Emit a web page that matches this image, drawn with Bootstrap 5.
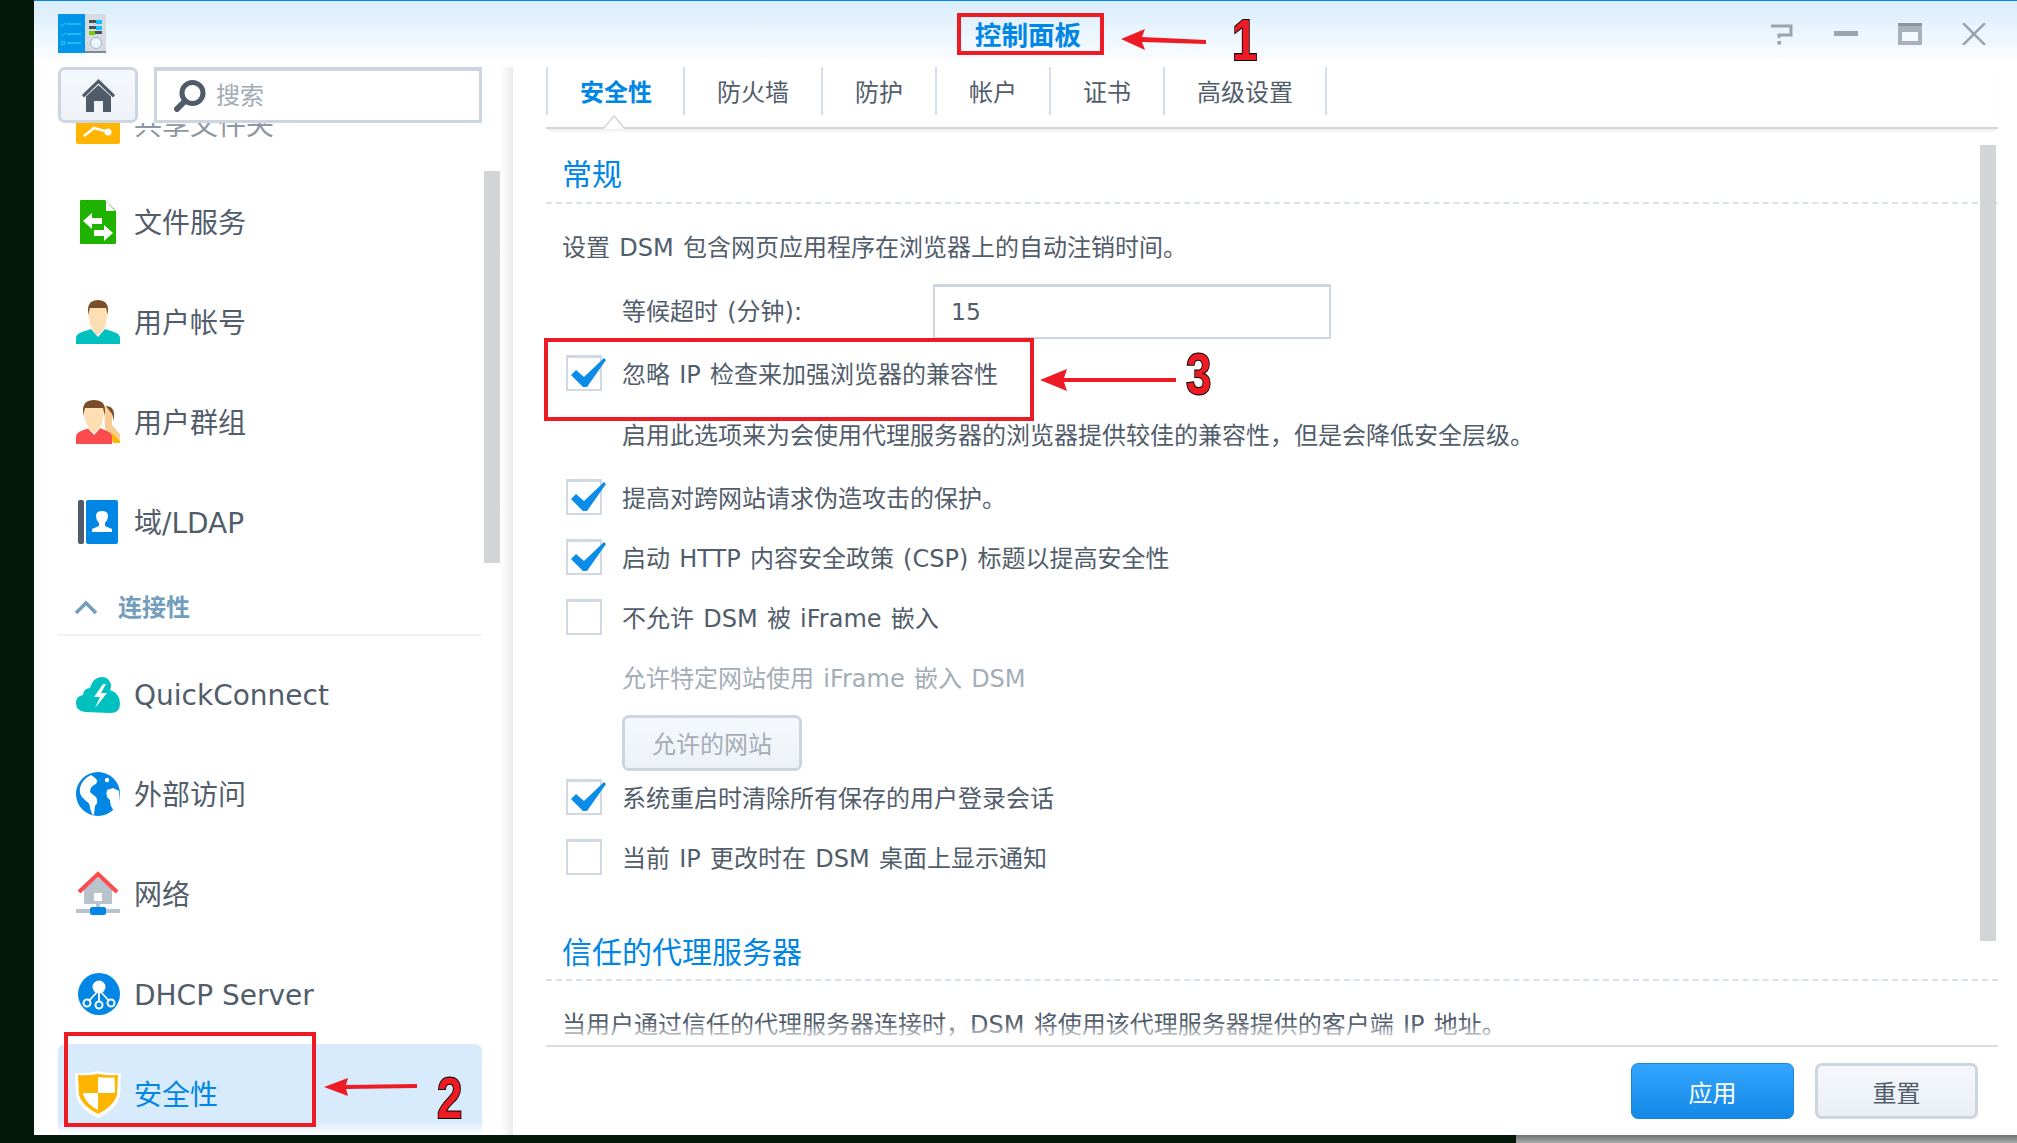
<!DOCTYPE html>
<html lang="zh"><head><meta charset="utf-8"><title>控制面板</title>
<link href="https://cdn.jsdelivr.net/npm/bootstrap@5.3.0/dist/css/bootstrap.min.css" rel="stylesheet">
<style>
html,body{height:100%;overflow:hidden}
body{background:#04190a;font-family:"DejaVu Sans","Noto Sans CJK SC",sans-serif;color:#525d6b;position:relative;font-size:24px}
.stage{height:1143px}
.upper{height:1135px}
.leftgap{width:34px;flex:none}
.win{background:#fff;min-width:0}
.titlebar{height:60px;flex:none;border-top:1px solid #0086e5;background:linear-gradient(#d8ecfc,#fbfdff);padding:7px 31px 0 24px}
.logo{width:48px;height:40px}
.wintitle{font-size:26.600px;font-weight:700;color:#0086e5;margin:3px 0 0 12px;line-height:1.2}
.sidecol,.rightctl{flex:1 1 0}
.rightctl{gap:40px}
.side{width:466px;flex:none;padding:7px 18px 0 24px;position:relative}
.sidetop{height:56px;gap:16px;flex:none}
.homebtn{width:80px;height:56px;padding:0;border:3px solid #ccd5e0;border-radius:7px;background:linear-gradient(#f5f9fd,#eef2f7)}
.searchbox{width:328px;height:56px;border:3px solid #ccd5e0;border-top-width:4px;background:#fff;padding-left:17px;gap:10px}
.searchbox input{border:0;outline:0;padding:0;font-size:24px;width:240px;color:#525d6b;background:transparent}
.searchbox input::placeholder{color:#a3abb4;opacity:1}
.menu{height:1012px;overflow:hidden}
.mitem{height:100px;padding-left:18px;font-size:28px;gap:14px;line-height:1.2}
.mitem svg{width:44px;height:44px;flex:none;overflow:visible}
.mitem span{padding-top:3px}
.mfirst{height:49px;overflow:hidden}
.mfirst .minner{margin-top:-26px;gap:14px;color:#8e97a2}
.mfirst .minner span{padding-top:8px;font-size:28px}
.sechead{height:64px;padding:9px 0 0 16px;border-bottom:2px solid #eef1f5;gap:20px;font-size:24px;font-weight:700;color:#739dbd;margin-bottom:8px}
.msel{height:100px;color:#0086e5;background:linear-gradient(#d8ebfc 78px,#fff 91px);border-radius:7px 7px 0 0}
.thumb1{position:absolute;left:450px;top:111px;width:16px;height:392px;background:#d3d4d6}
.divider{width:15px;flex:none;margin-top:7px;background:linear-gradient(90deg,#fff,#ececec 13px,#fff 13px)}
.mainp{min-width:0;padding:7px 19px 0 31px}
.tabbar{height:62px;flex:none;border-bottom:2px solid #d4d5d6;position:relative;align-items:flex-start;box-shadow:0 3px 4px -2px #e3e3e3;list-style:none;margin:0;padding:0}
.tabi{height:48px;padding:4px 32px 0;border-right:2px solid #d5deea;font-size:24px;color:#525d6b;line-height:1.2}
.tabi.first{border-left:2px solid #d5deea;font-weight:700;color:#0086e5;padding:4px 31px 0 32px}
.notch{position:absolute;left:54px;top:48px;width:28px;height:14px}
.scroller{height:916px;flex:none;overflow:hidden;position:relative;word-spacing:1.600px}
.scroller::after{content:"";position:absolute;left:0;right:0;bottom:0;height:22px;background:linear-gradient(rgba(255,255,255,0),#fff 85%)}
.secttl{border-bottom:2px dashed #d8e0ea;padding-left:16px;font-size:30px;color:#0086e5;line-height:40px}
.s1{height:75px;padding-top:26px}
.s2{height:106px;padding-top:58px}
.ln{line-height:41px;height:40px;white-space:nowrap}
.ind1{padding-left:16px}
.ind2{padding-left:76px}
.lab{width:311px;flex:none}
.numinp{width:398px;height:55px;border:2px solid #ccd5e0;border-top-width:3px;border-radius:0;padding:0 16px;font-size:23.400px;color:#525d6b;font-family:inherit;box-shadow:none}
.chk{padding-left:20px;height:36px;gap:20px;white-space:nowrap}
.chk .txt{margin-top:3px}
.box{width:36px;height:36px;border:2px solid #d0d9e4;border-top-width:3px;flex:none;position:relative;background:#fff}
.box svg{position:absolute;left:-2px;top:-3px;width:40px;height:36px;overflow:visible}
.muted{color:#a4adb7}
.mt8{margin-top:8px}
.allowbtn{width:180px;height:56px;padding:4px 0 0;border:3px solid #ccd5e0;border-radius:7px;background:linear-gradient(#f5f9fd,#eef2f7);color:#a4adb7;font-size:24px;margin-left:76px;line-height:1}
.foot{height:90px;flex:none;border-top:2px solid #dcdcdc;padding:16px 20px 0 0;gap:21px}
.fbtn{width:163px;height:56px;padding:5px 0 0;border-radius:7px;font-size:24px;line-height:1}
.fprim{background:linear-gradient(#33a6ff,#1488e6);border:1px solid #1a85dc;color:#fff}
.fsec{background:linear-gradient(#f5f9fd,#e9eef5);border:3px solid #ccd5e0;color:#525d6b}
.thumb2{position:absolute;left:1946px;top:145px;width:16px;height:796px;background:#d3d4d6}
.lower{height:8px}
.lowerr{width:501px;background:linear-gradient(#6e7270,#a8aaa9)}
.anno{position:absolute;left:0;top:0;width:2017px;height:1143px;pointer-events:none}
.annonum{font-family:"Liberation Sans",sans-serif;font-weight:700;font-size:57px;fill:#ed1c24;stroke:#000;stroke-width:2px;paint-order:stroke}
</style></head>
<body>
<div class="stage d-flex flex-column">
 <div class="upper d-flex">
  <div class="leftgap"></div>
  <div class="win flex-grow-1 d-flex flex-column position-relative">
   <div class="titlebar d-flex align-items-center">
    <div class="sidecol">
     <svg class="logo d-block" viewBox="0 0 48 40"><rect width="27" height="39" fill="#0095e8"/><rect x="27" width="21" height="39" fill="#d5dbe0"/><rect x="27" y="37" width="21" height="2" fill="#7d8791"/><path d="M9 10h14M9 20h14M9 29h14" stroke="#25c8ff" stroke-width="1.300"/><path d="M3 10l2 2 3-4M3 20l2 2 3-4" stroke="#25c8ff" fill="none"/><rect x="3.500" y="27.500" width="3" height="3" fill="none" stroke="#25c8ff"/><rect x="31" y="6" width="13" height="3" fill="#48525c"/><rect x="38" y="6" width="6" height="4" fill="#10c0ff"/><rect x="31" y="12" width="13" height="3" fill="#48525c"/><rect x="38" y="12" width="6" height="4" fill="#10c0ff"/><rect x="31" y="17" width="13" height="3" fill="#48525c"/><rect x="31" y="17" width="6" height="4" fill="#6fd200"/><circle cx="38" cy="29" r="5.500" fill="#eaf6ff" stroke="#aab3bb"/></svg>
    </div>
    <div class="wintitle">控制面板</div>
    <div class="sidecol rightctl d-flex justify-content-end align-items-center">
     <svg width="24" height="22" viewBox="0 0 24 22"><path d="M1 3h20v9H9v3" fill="none" stroke="#9aa3ae" stroke-width="3"/><rect x="7.500" y="18" width="3.500" height="3.500" fill="#9aa3ae"/></svg>
     <svg width="24" height="6" viewBox="0 0 24 6"><rect width="24" height="5" fill="#9aa3ae"/></svg>
     <svg width="24" height="22" viewBox="0 0 24 22"><path d="M0 0h24v22H0z" fill="#a9b1bb"/><rect y="0" width="24" height="3" fill="#8b95a1"/><rect x="4" y="9" width="16" height="9" fill="#f4f9fe"/></svg>
     <svg width="24" height="22" viewBox="0 0 24 22"><path d="M1 0l22 22M23 0L1 22" stroke="#9aa3ae" stroke-width="2.500"/></svg>
    </div>
   </div>
   <div class="d-flex flex-grow-1" style="min-height:0">
    <nav class="side">
     <div class="sidetop d-flex">
      <button class="btn homebtn d-flex align-items-center justify-content-center" type="button" aria-label="首页">
       <svg width="33" height="33" viewBox="0 0 33 33"><path d="M16.500 0L33 16l-2 2.500-14.500-14L2 18.500 0 16z" fill="#4f5b68"/><path d="M4 17.500L16.500 6 29 17.500V33H21V22h-9v11H4z" fill="#4f5b68"/></svg>
      </button>
      <div class="searchbox d-flex align-items-center">
       <svg width="32" height="32" viewBox="0 0 32 32" class="flex-none"><circle cx="18.500" cy="13" r="10.500" fill="none" stroke="#4f5b68" stroke-width="5"/><path d="M11 21l-8 8" stroke="#4f5b68" stroke-width="6" stroke-linecap="round"/></svg>
       <input type="text" placeholder="搜索" aria-label="搜索">
      </div>
     </div>
     <div class="menu">
      <div class="mfirst ps-3"><div class="minner d-flex align-items-center" style="padding-left:2px">
       <svg width="44" height="44" viewBox="0 0 44 44" class="flex-none"><path d="M0 2h44v40q0 2-2 2H2q-2 0-2-2z" fill="#ffb400"/><path d="M8 36l10-8 14 4" stroke="#fff" stroke-width="2.500" fill="none"/><circle cx="32" cy="32" r="3.500" fill="#fff"/></svg>
       <span>共享文件夹</span></div></div>
      <div class="mitem d-flex align-items-center"><svg viewBox="0 0 44 44"><path d="M4 1q0-1 1-1h24l11 11v32q0 1-1 1H5q-1 0-1-1z" fill="#1fb300"/><path d="M30 1l9 10h-9z" fill="#fff"/><path d="M7 21l9-8v5h10v6H16v5zM37 33l-9 8v-5H18v-6h10v-5z" fill="#fff"/></svg><span>文件服务</span></div>
      <div class="mitem d-flex align-items-center"><svg viewBox="0 0 44 44"><path d="M0 44v-6q0-4 6-6l9-3 7 8 7-8 9 3q6 2 6 6v6z" fill="#00c0c0"/><path d="M12 11q0-11 10-11t10 11l-2 13q-3 9-8 11-5-2-8-11z" fill="#fddfb3"/><path d="M12 15V10Q12 0 22 0t10 10v5l-2-7H14z" fill="#7a4e2a"/></svg><span>用户帐号</span></div>
      <div class="mitem d-flex align-items-center"><svg viewBox="0 0 44 44"><path d="M28 6q8 0 8 9v10l8 9q0 6-1 8h-8l-6-14z" fill="#f9cc93"/><path d="M35 32l9 9v2h-7z" fill="#ffb400"/><path d="M30 6q7 0 8 7v8l-2-7z" fill="#7a4e2a"/><path d="M0 44v-7q0-4 5-6l8-3 5 7 6-7 7 3q5 2 5 6v7z" fill="#fa4b4e"/><path d="M7 11q0-11 11-11t11 11l-2 11q-3 8-9 12-6-4-9-12z" fill="#fddfb3" stroke="#fff"/><path d="M7 16V10Q7 0 18 0t11 10v6l-2-8H9z" fill="#7a4e2a"/></svg><span>用户群组</span></div>
      <div class="mitem d-flex align-items-center"><svg viewBox="0 0 44 44"><rect x="2" width="6" height="44" rx="2" fill="#4f5b68"/><rect x="10" width="32" height="44" rx="2" fill="#0086e5"/><path d="M16 32v-3l7-3v-3q-3-3-3-7 0-5 6-5t6 5q0 4-3 7v3l7 3v3z" fill="#fff"/></svg><span>域/LDAP</span></div>
      <div class="sechead d-flex align-items-center">
       <svg width="24" height="15" viewBox="0 0 24 15"><path d="M2 13l10-10 10 10" fill="none" stroke="#739dbd" stroke-width="3.500"/></svg><span>连接性</span></div>
      <div class="mitem d-flex align-items-center"><svg viewBox="0 0 44 44"><path d="M9 40Q0 39 0 31q0-7 7-8 0-6 7-7 3-11 12-11 7 0 9 8 0 4-1 5 10 3 10 14 0 9-10 9z" fill="#00c0c0"/><path d="M27 12l-9 13h6l-5 11 12-15h-6l5-9z" fill="#fff"/></svg><span>QuickConnect</span></div>
      <div class="mitem d-flex align-items-center"><svg viewBox="0 0 44 44"><circle cx="22" cy="22" r="22" fill="#0086e5"/><path d="M15 3q-9 4-11 13-1 5 2 9l4 4q4 2 4 7l2 6 2 1 1-9q4-4 1-9-4-3-6-5 0-6 6-8 4-4-5-9zM31 18l6-2 6 3q2 12-5 20-4-5-4-11-5-3-3-10z" fill="#fff"/><circle cx="31" cy="8" r="2.200" fill="#fff"/></svg><span>外部访问</span></div>
      <div class="mitem d-flex align-items-center"><svg viewBox="0 0 44 44"><path d="M8 17L22 5l14 12v15H8z" fill="#b9c3ce"/><rect x="18" y="21" width="8" height="8" fill="#fff"/><path d="M3 20L22 2l19 18" fill="none" stroke="#fa4b4e" stroke-width="4"/><rect x="20" y="32" width="4" height="5" fill="#b9c3ce"/><rect y="37" width="44" height="4" fill="#b9c3ce"/><rect x="14" y="35" width="16" height="8" rx="2" fill="#0086e5"/></svg><span>网络</span></div>
      <div class="mitem d-flex align-items-center"><svg viewBox="0 0 44 44"><circle cx="23" cy="22" r="21" fill="#0086e5"/><circle cx="23" cy="15" r="6.500" fill="#fff"/><path d="M23 20v12M21 20l-9 10M25 20l9 10" stroke="#fff" stroke-width="1.800"/><g fill="#0086e5" stroke="#fff" stroke-width="2"><circle cx="11" cy="31" r="3.500"/><circle cx="23" cy="33" r="3.500"/><circle cx="35" cy="31" r="3.500"/></g></svg><span>DHCP Server</span></div>
      <div class="mitem msel d-flex align-items-center"><svg viewBox="0 0 44 44"><path d="M22 -1q11 3 23 2l-1 22q-3 14-22 23Q3 37 0 23L-1 1q12 1 23-2z" fill="#fff"/><path d="M22 2q10 2 20 1l-1 20q-3 11-19 19Q6 34 3 23L2 3q10 1 20-1z" fill="#ffb400"/><path d="M22 5v16h17l-.5-15.500Q30 6 22 5zM22 21v17q-12-6-15-16v-1z" fill="#fff"/></svg><span>安全性</span></div>
     </div>
     <div class="thumb1"></div>
    </nav>
    <div class="divider"></div>
    <main class="mainp flex-grow-1 d-flex flex-column">
     <ul class="tabbar d-flex">
      <li class="tabi first d-flex align-items-center">安全性</li><li class="tabi d-flex align-items-center">防火墙</li><li class="tabi d-flex align-items-center">防护</li><li class="tabi d-flex align-items-center">帐户</li><li class="tabi d-flex align-items-center">证书</li><li class="tabi d-flex align-items-center">高级设置</li>
      <li class="notch"><svg width="28" height="14" viewBox="0 0 28 14" class="d-block"><path d="M0 14h3L14 1l11 13h3" fill="#fff" stroke="#d4d5d6" stroke-width="1.500"/></svg></li>
     </ul>
     <div class="scroller">
      <div class="secttl s1">常规</div>
      <div class="ln ind1 mt-4">设置 DSM 包含网页应用程序在浏览器上的自动注销时间。</div>
      <div class="ind2 d-flex align-items-center mt-3"><span class="lab">等候超时 (分钟):</span><input class="form-control numinp" type="text" value="15" aria-label="等候超时"></div>
      <div class="chk d-flex align-items-center mt-3"><span class="box"><svg viewBox="0 0 40 36"><path d="M5 20l5-5 8 7L38 3l2 2-19 27h-4z" fill="#0a8ce8"/></svg></span><span class="txt">忽略 IP 检查来加强浏览器的兼容性</span></div>
      <div class="ln ind2" style="margin-top:25px">启用此选项来为会使用代理服务器的浏览器提供较佳的兼容性，但是会降低安全层级。</div>
      <div class="chk d-flex align-items-center" style="margin-top:23px"><span class="box"><svg viewBox="0 0 40 36"><path d="M5 20l5-5 8 7L38 3l2 2-19 27h-4z" fill="#0a8ce8"/></svg></span><span class="txt">提高对跨网站请求伪造攻击的保护。</span></div>
      <div class="chk d-flex align-items-center mt-4"><span class="box"><svg viewBox="0 0 40 36"><path d="M5 20l5-5 8 7L38 3l2 2-19 27h-4z" fill="#0a8ce8"/></svg></span><span class="txt">启动 HTTP 内容安全政策 (CSP) 标题以提高安全性</span></div>
      <div class="chk d-flex align-items-center mt-4"><span class="box"></span><span class="txt">不允许 DSM 被 iFrame 嵌入</span></div>
      <div class="ln ind2 muted mt-4">允许特定网站使用 iFrame 嵌入 DSM</div>
      <button class="btn allowbtn d-block mt-3" type="button">允许的网站</button>
      <div class="chk d-flex align-items-center mt8"><span class="box"><svg viewBox="0 0 40 36"><path d="M5 20l5-5 8 7L38 3l2 2-19 27h-4z" fill="#0a8ce8"/></svg></span><span class="txt">系统重启时清除所有保存的用户登录会话</span></div>
      <div class="chk d-flex align-items-center mt-4"><span class="box"></span><span class="txt">当前 IP 更改时在 DSM 桌面上显示通知</span></div>
      <div class="secttl s2">信任的代理服务器</div>
      <div class="ln ind1 mt-4">当用户通过信任的代理服务器连接时，DSM 将使用该代理服务器提供的客户端 IP 地址。</div>
     </div>
     <div class="foot d-flex justify-content-end">
      <button class="btn fbtn fprim" type="button">应用</button>
      <button class="btn fbtn fsec" type="button">重置</button>
     </div>
    </main>
   </div>
   <div class="thumb2"></div>
  </div>
 </div>
 <div class="lower d-flex"><div class="flex-grow-1"></div><div class="lowerr"></div></div>
</div>
<svg class="anno" viewBox="0 0 2017 1143">
 <g fill="none" stroke="#ed1c24" stroke-width="4"><rect x="959" y="15" width="143" height="38"/><rect x="66" y="1034" width="248" height="91"/><rect x="546" y="340" width="486" height="79"/></g>
 <g fill="#ed1c24">
  <path d="M1121 39l24-10-3 8 64 3v4l-64-2 3 8z"/>
  <path d="M324 1087l24-9-2 7 71-1v4l-71 1 2 7z"/>
  <path d="M1040 380l27-11-3 9h112v4h-112l3 9z"/>
 </g>
 <text class="annonum" transform="translate(1232 60) scale(.8 1)">1</text>
 <text class="annonum" transform="translate(437 1118) scale(.8 1)">2</text>
 <text class="annonum" transform="translate(1186 394) scale(.8 1)">3</text>
</svg>
</body></html>
